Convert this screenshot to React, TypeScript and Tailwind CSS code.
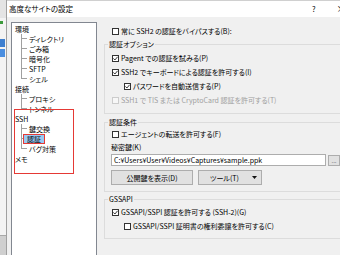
import React from "react";

type Node = { t: string; lvl: 0 | 1; last?: boolean; sel?: boolean };

const tree: Node[] = [
  { t: "環境", lvl: 0 },
  { t: "ディレクトリ", lvl: 1 },
  { t: "ごみ箱", lvl: 1 },
  { t: "暗号化", lvl: 1 },
  { t: "SFTP", lvl: 1 },
  { t: "シェル", lvl: 1, last: true },
  { t: "接続", lvl: 0 },
  { t: "プロキシ", lvl: 1 },
  { t: "トンネル", lvl: 1, last: true },
  { t: "SSH", lvl: 0 },
  { t: "鍵交換", lvl: 1 },
  { t: "認証", lvl: 1, sel: true },
  { t: "バグ対策", lvl: 1, last: true },
  { t: "メモ", lvl: 0 },
];

function Box({ checked, disabled }: { checked?: boolean; disabled?: boolean }) {
  return (
    <span
      className={`flex h-[7px] w-[7px] shrink-0 items-center justify-center border ${
        disabled ? "border-[#cccccc] bg-[#f7f7f7]" : "border-[#333333] bg-white"
      }`}
    >
      {checked && (
        <svg viewBox="0 0 5 5" className="h-[5px] w-[5px]">
          <polyline points="0.4,2.4 1.9,4 4.6,0.8" fill="none" stroke="#222" strokeWidth="0.9" />
        </svg>
      )}
    </span>
  );
}

function Check({
  label,
  checked,
  disabled,
  indent,
}: {
  label: string;
  checked?: boolean;
  disabled?: boolean;
  indent?: boolean;
}) {
  return (
    <div className={`flex h-[14px] items-center gap-[2px] ${indent ? "pl-[12px]" : ""}`}>
      <Box checked={checked} disabled={disabled} />
      <span className={`whitespace-nowrap ${disabled ? "text-[#a0a0a0]" : ""}`}>{label}</span>
    </div>
  );
}

function Group({ title, children, className }: { title: string; children: React.ReactNode; className?: string }) {
  return (
    <fieldset className={`border border-[#dcdcdc] pl-[3px] ${className ?? ""}`}>
      <legend className="px-[1px] leading-[8px]">{title}</legend>
      {children}
    </fieldset>
  );
}

function TreeRow({ n }: { n: Node }) {
  if (n.lvl === 0) {
    return <div className="flex h-[10px] items-center pl-[3px]">{n.t}</div>;
  }
  return (
    <div className="flex h-[10px]">
      <div className="ml-[9px] flex w-[6px] shrink-0 flex-col">
        <div className="h-[5px] border-b border-l border-[#a0a0a0]" />
        <div className={`flex-1 ${n.last ? "" : "border-l border-[#a0a0a0]"}`} />
      </div>
      {n.sel ? (
        <span className="-ml-[4px] flex h-[10px] items-center border border-[#e53935] bg-[#99c9f2] px-[3px]">
          {n.t}
        </span>
      ) : (
        <span className="ml-[2px] flex items-center">{n.t}</span>
      )}
    </div>
  );
}

export default function App() {
  return (
    <div className="flex h-[255px] w-[340px] overflow-hidden bg-[#f0f0f0] font-['Noto_Sans_CJK_JP',sans-serif] text-[7px] leading-[10px] text-black [font-feature-settings:'palt']">
      {/* background window edge */}
      <div className="flex w-[6px] shrink-0 flex-col bg-[#f3f3f3]">
        <div className="h-[18px] bg-[#e4e4e4]" />
        <div className="mt-[3px] h-[3px] w-[3px] bg-[#3c9a3c]" />
        <div className="mt-[15px] h-[8px] w-[5px] bg-[#3d7fd0]" />
        <div className="mt-[2px] h-[8px] w-[5px] bg-[#4a8ee0]" />
        <div className="flex-1" />
        <div className="h-[20px] border-t border-[#a8a8a8] bg-[#cfcfcf]" />
      </div>

      {/* dialog */}
      <div className="flex w-[360px] shrink-0 flex-col border-l border-[#a0a0a0]">
        <div className="flex h-[17px] shrink-0 items-center border-t border-[#d0d0d0] bg-white pl-[2px] text-[7.5px]">
          <span className="w-[303px] shrink-0 whitespace-nowrap">高度なサイトの設定</span>
          <span>?</span>
          <span className="ml-[21px] text-[9px]">×</span>
        </div>

        <div className="flex flex-1 pl-[4px] pt-[5px]">
          {/* tree */}
          <div className="relative h-[260px] w-[86px] shrink-0 border border-[#828790] bg-white pt-[1px]">
            {tree.map((n) => (
              <TreeRow key={n.t} n={n} />
            ))}
            <div className="pointer-events-none absolute left-[2px] top-[86px] h-[65px] w-[60px] border border-[#e53935]" />
          </div>

          {/* settings */}
          <div className="ml-[7px] flex w-[250px] shrink-0 flex-col">
            <div className="mt-[2px] pl-[8px]">
              <Check label="常に SSH2 の認証をバイパスする(B):" />
            </div>

            <Group title="認証オプション" className="mt-[2px] pb-[6px]">
              <div className="pl-[4px] pt-[3px]">
                <Check label="Pagent での認証を試みる(P)" checked />
                <Check label="SSH2 でキーボードによる認証を許可する(I)" checked />
                <Check label="パスワードを自動送信する(P)" checked indent />
                <Check label="SSH1 で TIS または CryptoCard 認証を許可する(T)" disabled />
              </div>
            </Group>

            <Group title="認証条件" className="mt-[4px] pb-[6px]">
              <div className="pt-[1px]">
                <div className="pl-[4px]">
                  <Check label="エージェントの転送を許可する(F)" />
                </div>
                <div className="flex h-[11px] items-center pl-[3px]">秘密鍵(K)</div>
                <div className="mt-[2px] flex pl-[3px]">
                  <div className="flex h-[12px] w-[215px] shrink-0 items-center border border-[#adadad] bg-white pl-[2px] whitespace-nowrap">
                    C:¥Users¥User¥Videos¥Captures¥sample.ppk
                  </div>
                  <div className="ml-[2px] mt-[1px] flex h-[11px] w-[12px] shrink-0 items-center justify-center border border-[#adadad] bg-[#e1e1e1] text-[6px] text-[#555]">
                    ...
                  </div>
                </div>
                <div className="mt-[4px] flex gap-[5px] pl-[3px]">
                  <div className="flex h-[15px] w-[82px] shrink-0 items-center justify-center border border-[#adadad] bg-[#e1e1e1]">
                    公開鍵を表示(D)
                  </div>
                  <div className="flex h-[15px] w-[64px] shrink-0 items-center border border-[#adadad] bg-[#e1e1e1] pl-[11px]">
                    <span>ツール(T)</span>
                    <svg viewBox="0 0 5 3" className="ml-[13px] h-[3px] w-[5px]">
                      <polygon points="0,0 5,0 2.5,3" fill="#111" />
                    </svg>
                  </div>
                </div>
              </div>
            </Group>

            <Group title="GSSAPI" className="mt-[3px] pb-[5px]">
              <div className="pl-[4px] pt-[2px]">
                <Check label="GSSAPI/SSPI 認証を許可する (SSH-2)(G)" checked />
                <Check label="GSSAPI/SSPI 証明書の権利委譲を許可する(C)" indent />
              </div>
            </Group>
          </div>
        </div>
      </div>
    </div>
  );
}
